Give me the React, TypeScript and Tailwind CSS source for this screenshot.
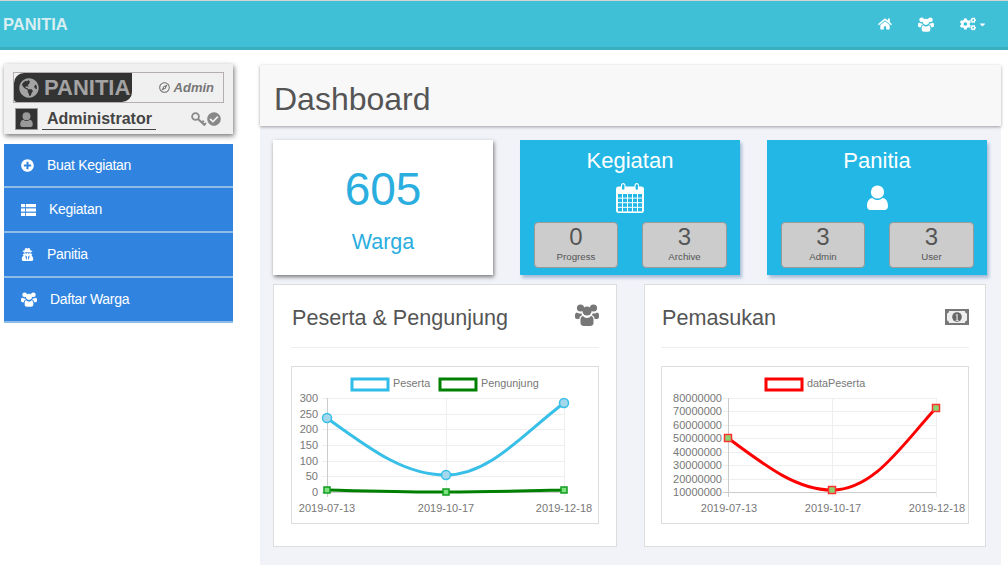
import { FaCaretDown, FaCheckCircle, FaCogs, FaGlobeAmericas, FaHome, FaPlusCircle, FaRegCompass, FaUserSecret } from "react-icons/fa";
import type { ReactNode } from "react";

// font-awesome 4 shapes that the icon packages no longer carry
function UsersIcon({ width, height, className }: { width: number; height: number; className?: string }) {
  return (
    <svg width={width} height={height} viewBox="0 0 24 22" fill="currentColor" className={className}>
      <circle cx="5.5" cy="4" r="3.6" />
      <circle cx="18.5" cy="4" r="3.6" />
      <circle cx="12" cy="7" r="4.6" />
      <path d="M5.5 15.5C5.5 13.5 7 12 8 12C9 13.2 10.5 14 12 14C13.5 14 15 13.2 16 12C17 12 18.5 13.5 18.5 15.5V19C18.5 21 17 22 15 22H9C7 22 5.5 21 5.5 19Z" />
      <path d="M0 11C0 9.5 1 8.5 2 8.5C3 9.5 5 9.8 6.5 9.5C6.7 10.5 7 11 7.2 11.3C5.5 11.8 4.5 13 4.3 15H2C1 15 0 14 0 13Z" />
      <path d="M24 11C24 9.5 23 8.5 22 8.5C21 9.5 19 9.8 17.5 9.5C17.3 10.5 17 11 16.8 11.3C18.5 11.8 19.5 13 19.7 15H22C23 15 24 14 24 13Z" />
    </svg>
  );
}

function UserIcon({ width, height }: { width: number; height: number }) {
  return (
    <svg width={width} height={height} viewBox="0 0 21 25" fill="currentColor">
      <circle cx="10.5" cy="7" r="6.6" />
      <path d="M0 21C0 16 2.5 13 5.5 13C7 14.5 8.5 15 10.5 15C12.5 15 14 14.5 15.5 13C18.5 13 21 16 21 21C21 23.5 19.5 25 17.5 25H3.5C1.5 25 0 23.5 0 21Z" />
    </svg>
  );
}

function ListIcon() {
  return (
    <svg width="15" height="12" viewBox="0 0 15 12" fill="currentColor">
      {[0, 4.4, 8.8].map((y) => (
        <g key={y}>
          <rect x="0" y={y} width="4.2" height="3.2" />
          <rect x="5" y={y} width="10" height="3.2" />
        </g>
      ))}
    </svg>
  );
}

function CalendarIcon() {
  const cols = [2, 7, 12, 17, 22];
  const rows = [11, 15.6, 20.2, 24.8];
  return (
    <svg width="28" height="30" viewBox="0 0 28 30">
      <path d="M2.5 3.5H5V2.5C5 1 6 0 7.2 0C8.5 0 9.5 1 9.5 2.5V3.5H18.5V2.5C18.5 1 19.5 0 20.8 0C22 0 23 1 23 2.5V3.5H25.5C27 3.5 28 4.5 28 6V27.5C28 29 27 30 25.5 30H2.5C1 30 0 29 0 27.5V6C0 4.5 1 3.5 2.5 3.5Z" fill="#fff" />
      <rect x="6" y="1.2" width="2.4" height="5.5" rx="1.2" fill="#23b7e5" />
      <rect x="19.6" y="1.2" width="2.4" height="5.5" rx="1.2" fill="#23b7e5" />
      {rows.map((y) =>
        cols.map((x) => <rect key={`${x}-${y}`} x={x} y={y} width="4" height="3.6" fill="#23b7e5" />),
      )}
    </svg>
  );
}

function MoneyIcon() {
  return (
    <svg width="24" height="16" viewBox="0 0 24 16">
      <rect width="24" height="16" fill="#777" />
      <path d="M4 2H20C20 3.5 20.8 4.5 22 4.6V11.4C20.8 11.5 20 12.5 20 14H4C4 12.5 3.2 11.5 2 11.4V4.6C3.2 4.5 4 3.5 4 2Z" fill="#eee" />
      <circle cx="12" cy="8" r="4.8" fill="#666" />
      <path d="M10.6 5.8L12.6 4.9V11H13.8V11.8H10.6V11H11.5V6.2L10.6 6.6Z" fill="#eee" />
    </svg>
  );
}

function KeyIcon() {
  return (
    <svg width="16" height="15" viewBox="0 0 16 15" fill="none" stroke="#888">
      <circle cx="4.5" cy="4.5" r="3.4" strokeWidth="1.8" />
      <path d="M7 7L14 13.5M11 10.5L12.8 8.8M13.2 12.7L15 11" strokeWidth="2" />
    </svg>
  );
}

const menu = [
  { label: "Buat Kegiatan", icon: <FaPlusCircle size={13} />, gap: "ml-[13px]", height: "h-[44px]" },
  { label: "Kegiatan", icon: <ListIcon />, gap: "ml-[13px]", height: "h-[45px]" },
  { label: "Panitia", icon: <FaUserSecret size={13} />, gap: "ml-[13px]", height: "h-[45px]" },
  { label: "Daftar Warga", icon: <UsersIcon width={16} height={15} />, gap: "ml-[13px]", height: "h-[45px]" },
];

function StatBox({ value, label, className }: { value: string; label: string; className: string }) {
  return (
    <div className={`flex h-[46px] flex-col items-center rounded-[4px] border border-[#999] bg-[#ccc] text-[#555] ${className}`}>
      <span className="text-[24px] leading-[27px]">{value}</span>
      <span className="text-[9.7px] leading-[13px]">{label}</span>
    </div>
  );
}

function BlueCard({ title, icon, boxes }: { title: string; icon: ReactNode; boxes: [string, string][] }) {
  return (
    <div className="flex h-[135px] w-[220px] flex-col items-center bg-[#23b7e5] pt-[7px] text-white shadow-[2px_3px_3px_rgba(60,110,170,0.4)]">
      <h2 className="text-[22px] leading-[27px]">{title}</h2>
      <div className="flex h-[41px] items-center pt-[6px]">{icon}</div>
      <div className="mt-[7px] flex w-full justify-between pl-[14px] pr-[13px]">
        <StatBox value={boxes[0][0]} label={boxes[0][1]} className="w-[84px]" />
        <StatBox value={boxes[1][0]} label={boxes[1][1]} className="w-[85px]" />
      </div>
    </div>
  );
}

function ChartCard({ title, icon, className, children }: { title: string; icon: ReactNode; className: string; children: ReactNode }) {
  return (
    <div className={`h-[263px] border border-[#ddd] bg-white ${className}`}>
      <div className="flex h-[63px] items-start justify-between border-b border-[#eee] pt-[19px]">
        <h3 className="pl-px text-[21.6px] leading-[28px] text-[#555]">{title}</h3>
        {icon}
      </div>
      <div className="mt-[18px] h-[158px] w-[308px] border border-[#ddd]">{children}</div>
    </div>
  );
}

const tick = "fill-[#777] text-[11px]";
const legend = "fill-[#777] text-[10.8px]";

function PesertaChart() {
  const ys = [31, 47, 62, 78, 94, 109, 125];
  const labels = ["300", "250", "200", "150", "100", "50", "0"];
  return (
    <svg width="306" height="156" className="font-['Liberation_Sans',sans-serif]">
      {ys.map((y, i) => (
        <g key={y}>
          <line x1="30" x2="272" y1={y + 0.5} y2={y + 0.5} stroke={i === 6 ? "#ccc" : "#eee"} />
          <text x="26" y={y + 4} textAnchor="end" className={tick}>{labels[i]}</text>
        </g>
      ))}
      {[35, 154, 272].map((x, i) => (
        <g key={x}>
          <line x1={x + 0.5} x2={x + 0.5} y1="31" y2="130" stroke={i === 0 ? "#ccc" : "#eee"} />
          <text x={x} y="145" textAnchor="middle" className={tick}>{["2019-07-13", "2019-10-17", "2019-12-18"][i]}</text>
        </g>
      ))}
      <rect x="60" y="12" width="36" height="11" fill="#fff" stroke="#2fbce8" strokeWidth="3" />
      <text x="101" y="20" className={legend}>Peserta</text>
      <rect x="148" y="12" width="36" height="11" fill="#fff" stroke="#008000" strokeWidth="3" />
      <text x="189" y="20" className={legend}>Pengunjung</text>
      <path d="M35 51 C78 82 112 108 154 108 C198 108 232 66 272 36" fill="none" stroke="#38bfe8" strokeWidth="3" />
      {[[35, 51], [154, 108], [272, 36]].map(([x, y]) => (
        <circle key={x} cx={x} cy={y} r="4.5" fill="#a5d8ea" stroke="#38bfe8" strokeWidth="1.5" />
      ))}
      <path d="M35 123 C80 124 110 125 154 125 C198 125 232 124 272 123" fill="none" stroke="#008000" strokeWidth="3" />
      {[[35, 123], [154, 125], [272, 123]].map(([x, y]) => (
        <rect key={x} x={x - 3} y={y - 3} width="6" height="6" fill="#7fe07f" stroke="#0f9d1f" strokeWidth="1.5" />
      ))}
    </svg>
  );
}

function PemasukanChart() {
  const ys = [31, 44, 58, 71, 85, 98, 112, 125];
  const labels = ["80000000", "70000000", "60000000", "50000000", "40000000", "30000000", "20000000", "10000000"];
  return (
    <svg width="306" height="156" className="font-['Liberation_Sans',sans-serif]">
      {ys.map((y, i) => (
        <g key={y}>
          <line x1="61" x2="274" y1={y + 0.5} y2={y + 0.5} stroke={i === 7 ? "#ccc" : "#eee"} />
          <text x="60" y={y + 4} textAnchor="end" className={tick}>{labels[i]}</text>
        </g>
      ))}
      {[66, 170, 274].map((x, i) => (
        <g key={x}>
          <line x1={x + 0.5} x2={x + 0.5} y1="31" y2="130" stroke={i === 0 ? "#ccc" : "#eee"} />
          <text x={x + 1} y="145" textAnchor="middle" className={tick}>{["2019-07-13", "2019-10-17", "2019-12-18"][i]}</text>
        </g>
      ))}
      <rect x="104" y="12" width="36" height="11" fill="#fff" stroke="#ff0000" strokeWidth="3" />
      <text x="145" y="20" className={legend}>dataPeserta</text>
      <path d="M66 71 C105 100 135 123 170 123 C212 123 240 78 274 41" fill="none" stroke="#ff0000" strokeWidth="3" />
      {[[66, 71], [170, 123], [274, 41]].map(([x, y]) => (
        <rect key={x} x={x - 3.5} y={y - 3.5} width="7" height="7" fill="#8fd070" stroke="#ff3030" strokeWidth="1.5" />
      ))}
    </svg>
  );
}

export default function App() {
  return (
    <div className="h-[576px] w-[1008px] overflow-hidden bg-white font-['Liberation_Sans',Arial,sans-serif]">
      <header className="flex h-[50px] items-center justify-between border-t border-b-[3px] border-t-[#d4d4d4] border-b-[#3aaebf] bg-[#3fc0d6] pl-[3px] pr-[21px]">
        <span className="text-[16.5px] font-bold text-[#d9eef2]">PANITIA</span>
        <nav className="flex items-center text-white">
          <FaHome size={14} />
          <UsersIcon width={16} height={15} className="ml-[26px]" />
          <FaCogs size={16} className="ml-[26px]" />
          <FaCaretDown size={9} className="ml-[2px]" />
        </nav>
      </header>

      <div className="flex pt-[15px]">
        <aside className="ml-[4px] w-[229px]">
          <div className="h-[70px] -translate-y-px bg-[#f0f0f0] px-[9px] pt-[8px] shadow-[1px_2px_5px_rgba(0,0,0,0.55)]">
            <div className="flex h-[31px] w-[211px] items-center justify-between border border-[#b5aeae]">
              <div className="flex h-[29px] w-[118px] items-center gap-[5px] rounded-tl-[10px] rounded-br-[10px] rounded-bl-[3px] bg-[#333] pl-[5px] text-[#a3a3a3]">
                <FaGlobeAmericas size={20} />
                <span className="text-[22px] font-bold leading-none">PANITIA</span>
              </div>
              <div className="mr-[9px] flex items-center gap-[4px] text-[#777]">
                <FaRegCompass size={11} />
                <span className="text-[13px] font-bold italic">Admin</span>
              </div>
            </div>
            <div className="mt-[5px] flex items-center">
              <div className="ml-[2px] flex h-[22px] w-[23px] items-center justify-center border border-[#999] bg-[#333] text-[#999]">
                <UserIcon width={13} height={15} />
              </div>
              <span className="ml-[4px] border-b border-[#444] pl-[5px] pr-[4px] text-[16px] font-bold leading-[20px] text-[#444]">Administrator</span>
              <div className="ml-[35px] flex items-center text-[#888]">
                <KeyIcon />
                <FaCheckCircle size={14} />
              </div>
            </div>
          </div>
          <ul className="mt-[9px]">
            {menu.map((item) => (
              <li key={item.label} className={`flex items-center border-b-2 border-[#8fbde8] bg-[#3084e0] pl-[17px] text-[14px] tracking-[-0.3px] text-white ${item.height}`}>
                {item.icon}
                <span className={item.gap}>{item.label}</span>
              </li>
            ))}
          </ul>
        </aside>

        <main className="ml-[27px] h-[500px] w-[741px] bg-[#f1f3f8]">
          <div className="flex h-[61px] items-center bg-[#f8f8f8] pl-[14px] pt-[7px] shadow-[0_1px_3px_rgba(0,0,0,0.35)]">
            <h1 className="text-[32px] text-[#555]">Dashboard</h1>
          </div>
          <div className="mt-[14px] flex gap-[27px] pl-[13px]">
            <div className="flex h-[135px] w-[220px] flex-col items-center bg-white pt-[22px] text-[#2aaee0] shadow-[1px_2px_4px_rgba(0,0,0,0.5)]">
              <span className="text-[46px] leading-[55px]">605</span>
              <span className="mt-[12px] text-[21.5px] leading-[27px]">Warga</span>
            </div>
            <BlueCard title="Kegiatan" icon={<CalendarIcon />} boxes={[["0", "Progress"], ["3", "Archive"]]} />
            <BlueCard title="Panitia" icon={<UserIcon width={21} height={25} />} boxes={[["3", "Admin"], ["3", "User"]]} />
          </div>
          <div className="mt-[9px] flex gap-[27px] pl-[13px]">
            <ChartCard title="Peserta & Pengunjung" className="w-[344px] px-[17px]" icon={<UsersIcon width={24} height={22} className="text-[#777]" />}>
              <PesertaChart />
            </ChartCard>
            <ChartCard title="Pemasukan" className="w-[342px] pl-[16px] pr-[16px]" icon={<div className="pt-[5px]"><MoneyIcon /></div>}>
              <PemasukanChart />
            </ChartCard>
          </div>
        </main>
      </div>
    </div>
  );
}
